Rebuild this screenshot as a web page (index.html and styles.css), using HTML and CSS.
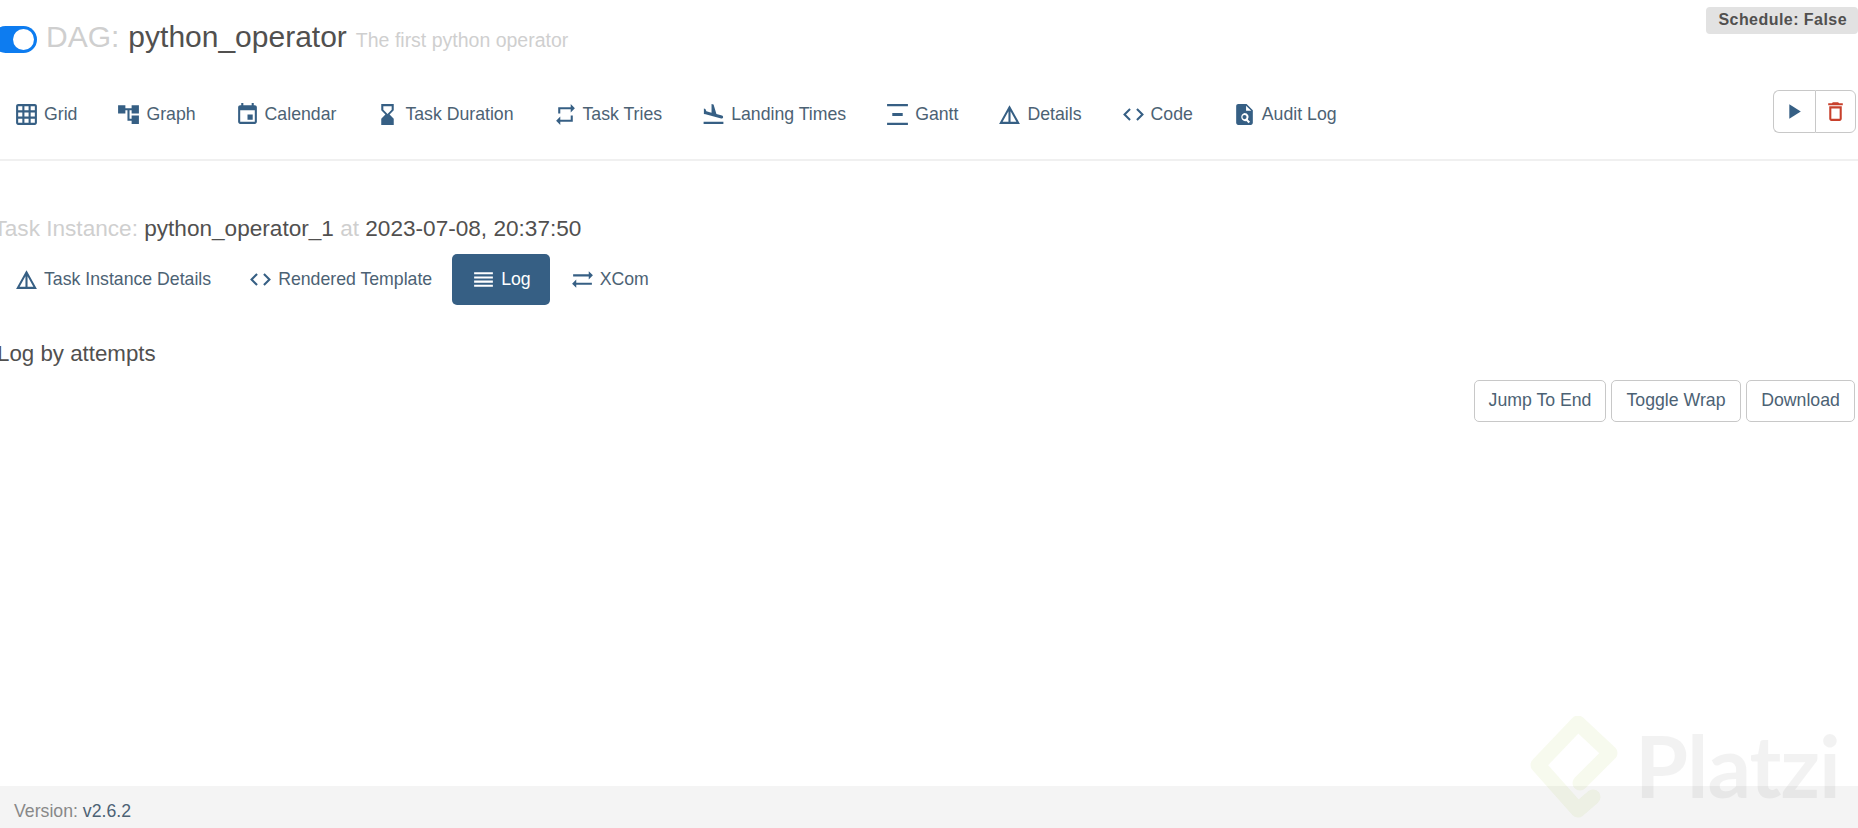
FILE: index.html
```html
<!DOCTYPE html>
<html lang="en">
<head>
<meta charset="utf-8">
<title>Airflow - python_operator</title>
<link rel="stylesheet" href="styles.css">
</head>
<body>
<svg class="defs" width="0" height="0" aria-hidden="true">
  <symbol id="i-grid" viewBox="0 0 24 24"><path d="M20 2H4c-1.1 0-2 .9-2 2v16c0 1.1.9 2 2 2h16c1.1 0 2-.9 2-2V4c0-1.1-.9-2-2-2zM8 20H4v-4h4v4zm0-6H4v-4h4v4zm0-6H4V4h4v4zm6 12h-4v-4h4v4zm0-6h-4v-4h4v4zm0-6h-4V4h4v4zm6 12h-4v-4h4v4zm0-6h-4v-4h4v4zm0-6h-4V4h4v4z"/></symbol>
  <symbol id="i-graph" viewBox="0 0 24 24"><path d="M22 11V3h-7v3H9V3H2v8h7V8h2v10h4v3h7v-8h-7v3h-2V8h2v3z"/></symbol>
  <symbol id="i-cal" viewBox="0 0 24 24"><path d="M17 12h-5v5h5v-5zM16 1v2H8V1H6v2H5c-1.11 0-1.99.9-1.99 2L3 19c0 1.1.89 2 2 2h14c1.1 0 2-.9 2-2V5c0-1.1-.9-2-2-2h-1V1h-2zm3 18H5V8h14v11z"/></symbol>
  <symbol id="i-hour" viewBox="0 0 24 24"><path d="M18 22l-.01-6L14 12l3.99-4.01L18 2H6v6l4 4-4 3.99V22h12zM8 7.5V4h8v3.5l-4 4-4-4z"/></symbol>
  <symbol id="i-repeat" viewBox="0 0 24 24"><path d="M7 7h10v3l4-4-4-4v3H5v6h2V7zm10 10H7v-3l-4 4 4 4v-3h12v-6h-2v4z"/></symbol>
  <symbol id="i-land" viewBox="0 0 24 24"><path d="M2.5 19h19v2h-19zm7.18-5.73l4.35 1.16 5.31 1.42c.8.21 1.62-.26 1.84-1.06.21-.8-.26-1.62-1.06-1.84l-5.31-1.42-2.76-9.02L10.12 2v8.28L5.15 8.95l-.93-2.32-1.45-.39v5.17l1.6.43 5.31 1.43z"/></symbol>
  <symbol id="i-gantt" viewBox="0 0 24 24"><path d="M22 2v2H2V2h20zM7 10.5v3h10v-3H7zM2 20v2h20v-2H2z"/></symbol>
  <symbol id="i-details" viewBox="0 0 24 24"><path d="M12 3L2 21h20L12 3zm1 5.92L18.6 19H13V8.92zm-2 0V19H5.4L11 8.92z"/></symbol>
  <symbol id="i-code" viewBox="0 0 24 24"><path d="M9.4 16.6L4.8 12l4.6-4.6L8 6l-6 6 6 6 1.4-1.4zm5.2 0l4.6-4.6-4.6-4.6L16 6l6 6-6 6-1.4-1.4z"/></symbol>
  <symbol id="i-audit" viewBox="0 0 24 24"><path fill-rule="evenodd" d="M14 2H6c-1.1 0-2 .9-2 2v16c0 1.1.9 2 2 2h12c1.1 0 2-.9 2-2V8l-6-6zm-2 8.5a4 4 0 0 1 3.2 6.4l2.1 2.1-1.4 1.4-2.1-2.1A4 4 0 1 1 12 10.500zm0 2a2 2 0 1 0 0 4 2 2 0 0 0 0-4zM13.500 3.500V8.500h5l-5-5z"/></symbol>
  <symbol id="i-log" viewBox="0 0 24 24"><path d="M3 15h18v-2H3v2zm0 4h18v-2H3v2zm0-8h18V9H3v2zm0-6v2h18V5H3z"/></symbol>
  <symbol id="i-sync" viewBox="0 0 24 24"><path d="M22 8l-4-4v3H3v2h15v3l4-4zM2 16l4 4v-3h15v-2H6v-3l-4 4z"/></symbol>
</svg>

<main class="page">
  <header class="head">
    <div class="head-top">
      <h1 class="title">
        <span class="toggle"><span class="knob"></span></span>
        <span class="muted">DAG:</span>
        <span class="dag-id">python_operator</span>
        <small class="desc">The first python operator</small>
      </h1>
      <span class="badge">Schedule: False</span>
    </div>
    <div class="nav-row">
      <nav class="nav">
        <a class="tab"><svg class="ico"><use href="#i-grid"/></svg>Grid</a>
        <a class="tab"><svg class="ico"><use href="#i-graph"/></svg>Graph</a>
        <a class="tab"><svg class="ico"><use href="#i-cal"/></svg>Calendar</a>
        <a class="tab"><svg class="ico"><use href="#i-hour"/></svg>Task Duration</a>
        <a class="tab"><svg class="ico"><use href="#i-repeat"/></svg>Task Tries</a>
        <a class="tab"><svg class="ico"><use href="#i-land"/></svg>Landing Times</a>
        <a class="tab"><svg class="ico"><use href="#i-gantt"/></svg>Gantt</a>
        <a class="tab"><svg class="ico"><use href="#i-details"/></svg>Details</a>
        <a class="tab"><svg class="ico"><use href="#i-code"/></svg>Code</a>
        <a class="tab"><svg class="ico"><use href="#i-audit"/></svg>Audit Log</a>
      </nav>
      <div class="actions">
        <button class="action"><svg class="ico" viewBox="0 0 24 24"><path d="M8 5v14l11-7z"/></svg></button>
        <button class="action"><svg class="ico danger" viewBox="0 0 24 24"><path d="M6 19c0 1.1.9 2 2 2h8c1.1 0 2-.9 2-2V7H6v12zM8 9h8v10H8V9zm7.500-5l-1-1h-5l-1 1H5v2h14V4z"/></svg></button>
      </div>
    </div>
  </header>

  <section class="task">
    <h2 class="task-title"><span class="muted">Task Instance:</span> python_operator_1 <span class="muted">at</span> 2023-07-08, 20:37:50</h2>
    <nav class="subnav">
      <a class="sub"><svg class="ico"><use href="#i-details"/></svg>Task Instance Details</a>
      <a class="sub"><svg class="ico"><use href="#i-code"/></svg>Rendered Template</a>
      <a class="sub active"><svg class="ico"><use href="#i-log"/></svg>Log</a>
      <a class="sub"><svg class="ico"><use href="#i-sync"/></svg>XCom</a>
    </nav>
    <h3 class="log-title">Log by attempts</h3>
    <div class="log-tools">
      <button class="tool tool-jump">Jump To End</button>
      <button class="tool tool-wrap">Toggle Wrap</button>
      <button class="tool tool-down">Download</button>
    </div>
  </section>
</main>

<footer class="foot">Version: <a class="ver">v2.6.2</a></footer>

<div class="mark" aria-hidden="true">
  <svg class="mark-logo" viewBox="0 0 90 106"><path d="M63 81L48 94L8 49L48 7L80 37L50 67"/></svg>
  <span class="mark-text">Platzi</span>
</div>
</body>
</html>
```
FILE: styles.css
```css
* { box-sizing: border-box; }

html, body { margin: 0; height: 100%; }

body {
  display: flex;
  flex-direction: column;
  height: 828px;
  overflow: hidden;
  position: relative;
  background: #fff;
  font-family: "Liberation Sans", Arial, sans-serif;
  font-size: 17.700px;
  color: #51504f;
}

.defs { position: absolute; }

.page { flex: 1; }

.ico {
  width: 25px;
  height: 25px;
  flex: none;
  fill: #365f84;
}

/* Header */
.head { height: 161px; border-bottom: 2px solid #f0f0f0; }

.head-top {
  display: flex;
  justify-content: space-between;
  align-items: flex-start;
  height: 85px;
}

.title {
  display: flex;
  align-items: center;
  gap: 9px;
  margin: 17px 0 0 -8px;
  font-size: 30px;
  font-weight: 400;
  line-height: 32px;
}

.toggle {
  display: block;
  position: relative;
  width: 45px;
  height: 27px;
  margin-top: 5px;
  border-radius: 14px;
  background: #0d7cf0;
}

.knob {
  position: absolute;
  top: 3px;
  right: 3px;
  width: 21px;
  height: 21px;
  border-radius: 50%;
  background: #fff;
}

.muted { color: #cfcfcf; }

.dag-id { color: #51504f; }

.desc { font-size: 19.500px; color: #cfcfcf; padding-top: 7px; }

.badge {
  margin-top: 7px;
  height: 27px;
  padding: 0 11px 0 12px;
  border-radius: 4px;
  background: #e2e2e2;
  color: #51504f;
  font-size: 16px;
  font-weight: 700;
  letter-spacing: .45px;
  line-height: 25px;
}

.nav-row {
  display: flex;
  justify-content: space-between;
  align-items: flex-start;
  padding-top: 5px;
  padding-right: 2px;
}

.nav {
  display: flex;
  gap: 39px;
  padding: 12px 0 0 14px;
}

.tab, .sub {
  display: flex;
  align-items: center;
  gap: 5px;
  color: #4c6274;
  line-height: 25px;
}

.actions { display: flex; }

.action {
  display: flex;
  align-items: center;
  justify-content: center;
  width: 41px;
  height: 43px;
  padding: 0;
  background: #fff;
  border: 1px solid #c8c8c8;
}

.action:first-child { width: 42px; padding-right: 2px; border-radius: 6px 0 0 6px; border-right: 0; }
.action:last-child { border-radius: 0 6px 6px 0; }

.danger { fill: #c8402c; }

/* Task */
.task-title {
  margin: 0 0 0 -6.500px;
  padding-top: 56px;
  font-size: 22.600px;
  font-weight: 400;
  line-height: 24px;
  white-space: pre-wrap;
}

.subnav {
  display: flex;
  margin-top: 13px;
  height: 51px;
  padding-left: 14px;
}

.sub { padding-right: 37px; }

.sub.active {
  margin-left: -17px;
  margin-right: 20px;
  padding: 0 19px;
  border-radius: 5px;
  background: #365f84;
  color: #fff;
}

.sub.active .ico { fill: #fff; }

.log-title {
  margin: 0 0 0 -3px;
  padding-top: 37px;
  font-size: 22.300px;
  font-weight: 400;
  line-height: 24px;
}

.log-tools {
  display: flex;
  justify-content: flex-end;
  gap: 5px;
  padding-right: 3px;
  margin-top: 14px;
}

.tool {
  height: 42px;
  padding: 0 0 2px;
  background: #fff;
  border: 1px solid #c8c8c8;
  border-radius: 5px;
  color: #4c6274;
  font: inherit;
}

.tool-jump { width: 132px; }
.tool-wrap { width: 130px; }
.tool-down { width: 109px; }

/* Footer */
.foot {
  height: 42px;
  padding-left: 14px;
  background: #f4f4f4;
  color: #888;
  line-height: 50px;
}

.ver { color: #4c6274; }

/* Watermark */
.mark {
  position: absolute;
  left: 1530px;
  top: 716px;
  display: flex;
  align-items: flex-start;
  gap: 15px;
  pointer-events: none;
}

.mark-logo {
  width: 90px;
  height: 106px;
  fill: none;
  stroke: rgba(170, 200, 70, .09);
  stroke-width: 15;
  stroke-linejoin: round;
  stroke-linecap: round;
}

.mark-text {
  margin-top: -4px;
  font-family: Lato, sans-serif;
  font-size: 86px;
  font-weight: 700;
  letter-spacing: -1px;
  line-height: 106px;
  color: rgba(0, 0, 0, .05);
}
```
